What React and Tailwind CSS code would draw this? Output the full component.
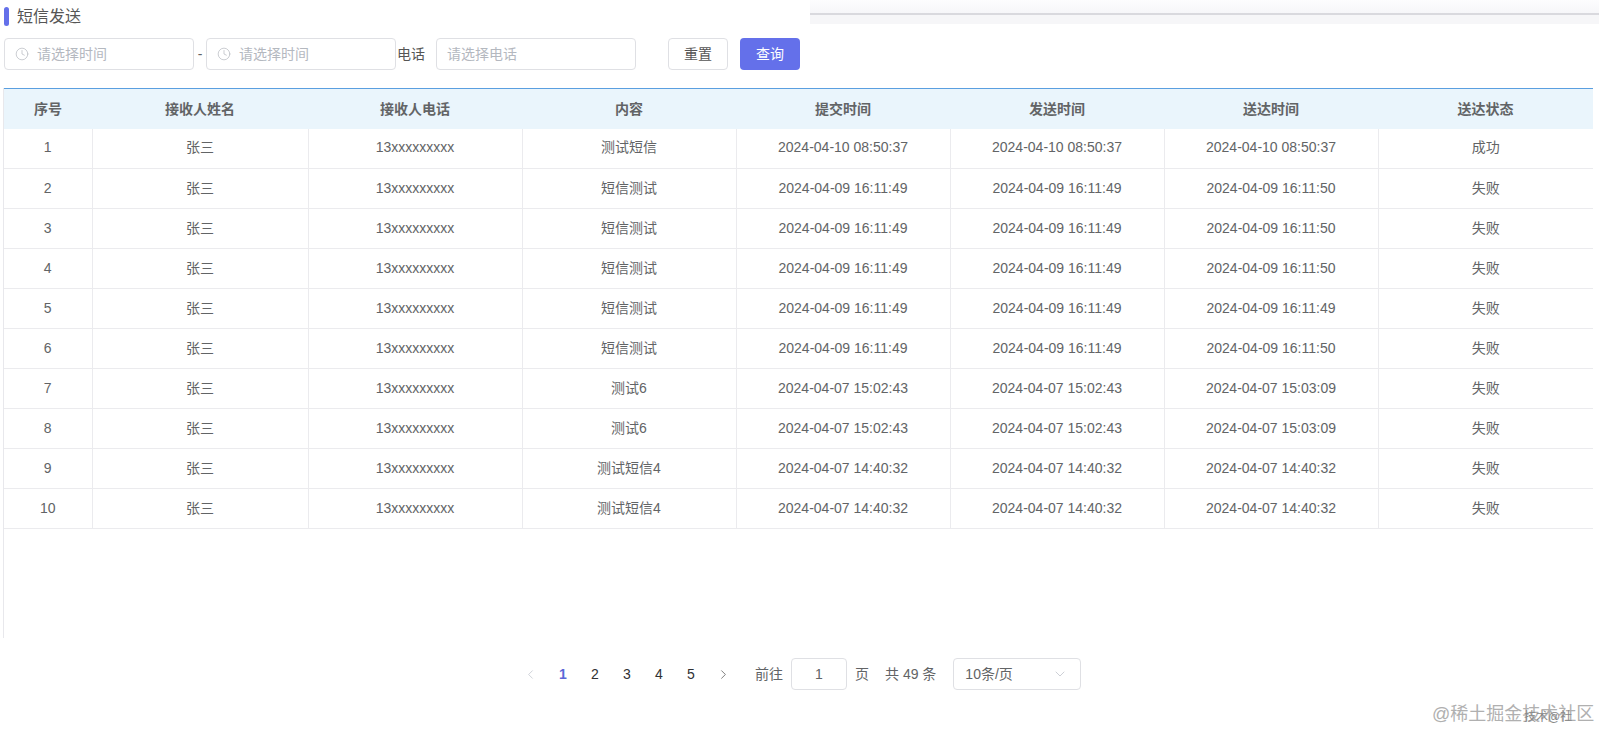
import { ChevronDown, ChevronLeft, ChevronRight, Clock } from "lucide-react";

const columns = ["序号", "接收人姓名", "接收人电话", "内容", "提交时间", "发送时间", "送达时间", "送达状态"];

const rows = [
  ["1", "测试短信", "2024-04-10 08:50:37", "2024-04-10 08:50:37", "2024-04-10 08:50:37", "成功"],
  ["2", "短信测试", "2024-04-09 16:11:49", "2024-04-09 16:11:49", "2024-04-09 16:11:50", "失败"],
  ["3", "短信测试", "2024-04-09 16:11:49", "2024-04-09 16:11:49", "2024-04-09 16:11:50", "失败"],
  ["4", "短信测试", "2024-04-09 16:11:49", "2024-04-09 16:11:49", "2024-04-09 16:11:50", "失败"],
  ["5", "短信测试", "2024-04-09 16:11:49", "2024-04-09 16:11:49", "2024-04-09 16:11:49", "失败"],
  ["6", "短信测试", "2024-04-09 16:11:49", "2024-04-09 16:11:49", "2024-04-09 16:11:50", "失败"],
  ["7", "测试6", "2024-04-07 15:02:43", "2024-04-07 15:02:43", "2024-04-07 15:03:09", "失败"],
  ["8", "测试6", "2024-04-07 15:02:43", "2024-04-07 15:02:43", "2024-04-07 15:03:09", "失败"],
  ["9", "测试短信4", "2024-04-07 14:40:32", "2024-04-07 14:40:32", "2024-04-07 14:40:32", "失败"],
  ["10", "测试短信4", "2024-04-07 14:40:32", "2024-04-07 14:40:32", "2024-04-07 14:40:32", "失败"],
];

function DateInput({ className }) {
  return (
    <div className={`flex h-8 items-center rounded border border-[#dfe0e4] bg-white pl-[10px] text-[#b4b8bf] ${className}`}>
      <Clock size={14} strokeWidth={1.2} className="mr-2 text-[#b4b8bf]" />
      请选择时间
    </div>
  );
}

export default function App() {
  return (
    <div className="relative h-[731px] w-[1599px] overflow-hidden bg-white font-['Liberation_Sans','Noto_Sans_CJK_SC',sans-serif] text-sm text-[#626466]">
      <div className="flex h-[38px] items-start">
        <div className="mt-[7px] flex w-[810px] items-center pl-1">
          <span className="h-[19px] w-[5px] rounded-sm bg-[#6470ea]" />
          <span className="ml-2 text-base leading-[19px] text-[#555]">短信发送</span>
        </div>
        <div className="flex h-6 flex-1 flex-col">
          <div className="h-[13px] bg-gradient-to-b from-[#fdfdfe] to-[#f6f6f9]" />
          <div className="h-0.5 bg-[#d9d9de]" />
          <div className="flex-1 bg-[#f6f6f8]" />
        </div>
      </div>

      <div className="flex items-center pl-1">
        <DateInput className="w-[190px]" />
        <span className="w-3 text-center">-</span>
        <DateInput className="w-[190px]" />
        <span className="ml-px w-[39px] text-[#555]">电话</span>
        <div className="flex h-8 w-[200px] items-center rounded border border-[#dfe0e4] pl-[10px] text-[#b4b8bf]">
          请选择电话
        </div>
        <button className="ml-8 h-8 w-[60px] rounded border border-[#dfe0e4] bg-white text-[#555]">重置</button>
        <button className="ml-3 h-8 w-[60px] rounded bg-[#6470ea] text-white">查询</button>
      </div>

      <div className="ml-[3px] mt-[18px] h-[550px] border-l border-[#e8e8ec]">
        <table className="w-[1589px] table-fixed border-collapse text-center">
          <colgroup>
            <col className="w-[88px]" />
            <col className="w-[216px]" />
            {[0, 1, 2, 3, 4].map((i) => (
              <col key={i} className="w-[214px]" />
            ))}
            <col className="w-[215px]" />
          </colgroup>
          <thead>
            <tr className="h-10 border-t border-[#5a9fe0] bg-[#eaf5fc]">
              {columns.map((col) => (
                <th key={col} className="p-0 font-bold text-[#626466]">
                  {col}
                </th>
              ))}
            </tr>
          </thead>
          <tbody>
            {rows.map((r) => (
              <tr key={r[0]} className="h-10 border-b border-[#ebebee]">
                <td className="border-r border-[#ebebee] p-0 pb-[2px]">{r[0]}</td>
                <td className="border-r border-[#ebebee] p-0 pb-[2px]">张三</td>
                <td className="border-r border-[#ebebee] p-0 pb-[2px]">13xxxxxxxxx</td>
                <td className="border-r border-[#ebebee] p-0 pb-[2px]">{r[1]}</td>
                <td className="border-r border-[#ebebee] p-0 pb-[2px]">{r[2]}</td>
                <td className="border-r border-[#ebebee] p-0 pb-[2px]">{r[3]}</td>
                <td className="border-r border-[#ebebee] p-0 pb-[2px]">{r[4]}</td>
                <td className="p-0 pb-[2px]">{r[5]}</td>
              </tr>
            ))}
          </tbody>
        </table>
      </div>

      <div className="mt-5 flex h-8 items-center pl-[523px]">
        <ChevronLeft size={15} strokeWidth={1.2} className="text-[#c0c4cc]" />
        <div className="ml-[9px] flex text-[#303133]">
          {["1", "2", "3", "4", "5"].map((n) => (
            <span key={n} className={`w-8 text-center ${n === "1" ? "font-bold text-[#5b68d8]" : ""}`}>
              {n}
            </span>
          ))}
        </div>
        <ChevronRight size={15} strokeWidth={1.2} className="ml-[9px] text-[#555]" />
        <span className="ml-[24px]">前往</span>
        <div className="ml-2 flex h-8 w-14 items-center justify-center rounded border border-[#dfe0e4]">1</div>
        <span className="ml-2">页</span>
        <span className="ml-4">共 49 条</span>
        <div className="ml-[17px] flex h-8 w-[128px] items-center justify-between rounded border border-[#dfe0e4] pl-[11px] pr-3">
          10条/页
          <ChevronDown size={16} strokeWidth={1.2} className="text-[#c0c4cc]" />
        </div>
      </div>

      <span className="absolute left-[1432px] top-[702px] text-[18px] leading-6 text-[#b0b0b0]">@稀土掘金技术社区</span>
      <span className="absolute left-[1524px] top-[709px] text-[12px] leading-4 text-[#888]">技术@社</span>
    </div>
  );
}
